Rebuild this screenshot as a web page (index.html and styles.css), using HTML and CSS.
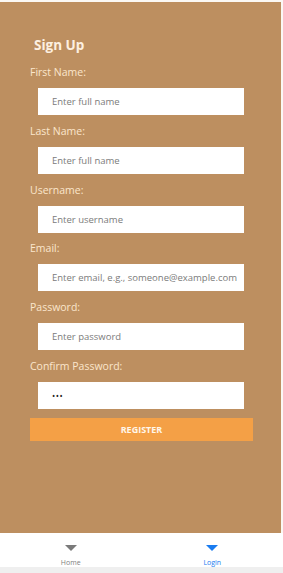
FILE: index.html
```html
<html lang="en">

<head>
    <meta charset="UTF-8">
    <meta name="viewport" content="width=device-width, initial-scale=1.0">
    <title>Sign Up</title>
    <link rel="stylesheet" href="styles.css">
</head>

<body>
    <div class="screen">
        <form class="signup">
            <h1 class="title">Sign Up</h1>

            <label class="label">First Name:</label>
            <input class="field" type="text" placeholder="Enter full name">

            <label class="label">Last Name:</label>
            <input class="field" type="text" placeholder="Enter full name">

            <label class="label">Username:</label>
            <input class="field" type="text" placeholder="Enter username">

            <label class="label">Email:</label>
            <input class="field" type="text" placeholder="Enter email, e.g., someone@example.com">

            <label class="label">Password:</label>
            <input class="field" type="password" placeholder="Enter password">

            <label class="label">Confirm Password:</label>
            <input class="field" type="password" value="abc">

            <button class="register" type="button">REGISTER</button>
        </form>
    </div>
    <div class="tabbar">
        <div class="tab">
            <svg class="tab-icon" width="12" height="7" viewBox="0 0 12 7"><path d="M0 0 H12 L6 6 Z" fill="#7a7a7a"/></svg>
            <span class="tab-text">Home</span>
        </div>
        <div class="tab active">
            <svg class="tab-icon" width="12" height="7" viewBox="0 0 12 7"><path d="M0 0 H12 L6 6 Z" fill="#1a7cf0"/></svg>
            <span class="tab-text">Login</span>
        </div>
    </div>
    <div class="bottom-strip"></div>
</body>

</html>
```

FILE: styles.css
```css
html,
body {
    margin: 0;
    padding: 0;
    width: 283px;
    height: 573px;
    background-color: #fbf8f4;
    font-family: "Open Sans", "Liberation Sans", sans-serif;
    overflow: hidden;
}

.screen {
    width: 281px;
    height: 531px;
    margin-top: 2px;
    background-color: #bd8f60;
    box-sizing: border-box;
    padding-top: 34px;
}

.signup {
    display: flex;
    flex-direction: column;
    align-items: flex-start;
    padding-left: 30px;
    margin: 0;
}

.title {
    margin: 0 0 11px 4px;
    font-size: 13.5px;
    line-height: 18px;
    font-weight: 700;
    color: #fdf0e0;
}

.label {
    font-size: 10.5px;
    line-height: 14px;
    color: #fbe6cc;
    margin-bottom: 9px;
}

.field {
    width: 206px;
    height: 27px;
    margin: 0 0 8.8px 8px;
    border: none;
    outline: none;
    box-sizing: border-box;
    padding: 0 0 0 14px;
    background-color: #fff;
    font-family: "Open Sans", "Liberation Sans", sans-serif;
    font-size: 9.5px;
    color: #222;
}

.field::placeholder {
    color: #7b7b7b;
}

.field[type="password"] {
    font-size: 8.5px;
    letter-spacing: 0.5px;
}

.field[type="password"]::placeholder {
    font-size: 9.5px;
    letter-spacing: 0;
}

.register {
    width: 223px;
    height: 23px;
    border: none;
    background-color: #f4a046;
    color: #fff6ea;
    font-family: "Open Sans", "Liberation Sans", sans-serif;
    font-size: 9px;
    font-weight: 700;
    padding: 0;
}

.tabbar {
    height: 34px;
    display: flex;
    background-color: #fff;
}

.tab {
    flex: 1;
    display: flex;
    flex-direction: column;
    align-items: center;
    padding-top: 12px;
}

.tab-icon {
    display: block;
}

.tab-text {
    font-size: 7px;
    line-height: 9px;
    margin-top: 6px;
    color: #808080;
}

.tab.active .tab-text {
    color: #1a7cf0;
}

.bottom-strip {
    height: 6px;
    background-color: #efefef;
}
```
